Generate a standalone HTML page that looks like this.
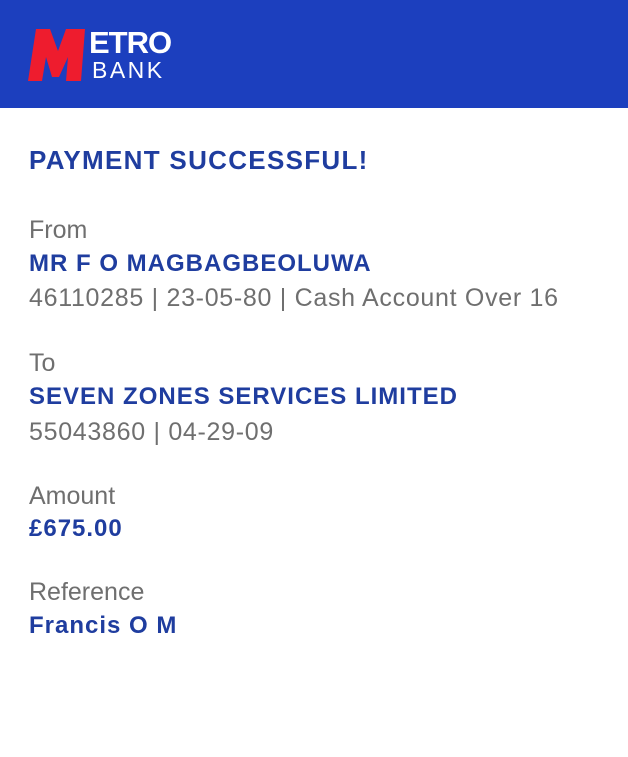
<!DOCTYPE html>
<html><head><meta charset="utf-8"><style>
html,body{margin:0;padding:0;background:#fff;width:628px;height:757px;overflow:hidden;font-family:"Liberation Sans",sans-serif}
.hdr{position:absolute;left:0;top:0;width:628px;height:108px;background:#1c3fbe}
.m{position:absolute;left:28px;top:27px}
.etro{position:absolute;left:89px;top:26px;color:#fff;font-weight:bold;font-size:31px;letter-spacing:-1px;line-height:34px}
.bank{position:absolute;left:92px;top:58px;color:#fff;font-size:23px;letter-spacing:2.5px;line-height:24px}
.t{position:absolute;left:29px;white-space:nowrap}
.title{color:#1f3d9f;font-weight:bold;font-size:26px;top:145px;letter-spacing:1.3px}
.lab{color:#6f6f6f;font-size:25px}
.val{color:#1f3d9f;font-weight:bold;font-size:24px;letter-spacing:1px}
.sub{color:#6f6f6f;font-size:25px;letter-spacing:0.7px}
</style></head><body>
<div class="hdr">
<svg class="m" width="60" height="56" viewBox="0 0 60 56"><path d="M8 2 L22 2 L30 24 L38 2 L57 2 L53 54 L38 54 L40 30 L31 50 L24 50 L18 30 L14 54 L0 54 Z" fill="#ee1c2e"/></svg>
<div class="etro">ETRO</div>
<div class="bank">BANK</div>
</div>
<div class="t title">PAYMENT SUCCESSFUL!</div>
<div class="t lab" style="top:216px">From</div>
<div class="t val" style="top:250px">MR F O MAGBAGBEOLUWA</div>
<div class="t sub" style="top:284px">46110285 | 23-05-80 | Cash Account Over 16</div>
<div class="t lab" style="top:349px">To</div>
<div class="t val" style="top:383px">SEVEN ZONES SERVICES LIMITED</div>
<div class="t sub" style="top:418px">55043860 | 04-29-09</div>
<div class="t lab" style="top:482px">Amount</div>
<div class="t val" style="top:515px">£675.00</div>
<div class="t lab" style="top:578px">Reference</div>
<div class="t val" style="top:612px">Francis O M</div>
</body></html>
